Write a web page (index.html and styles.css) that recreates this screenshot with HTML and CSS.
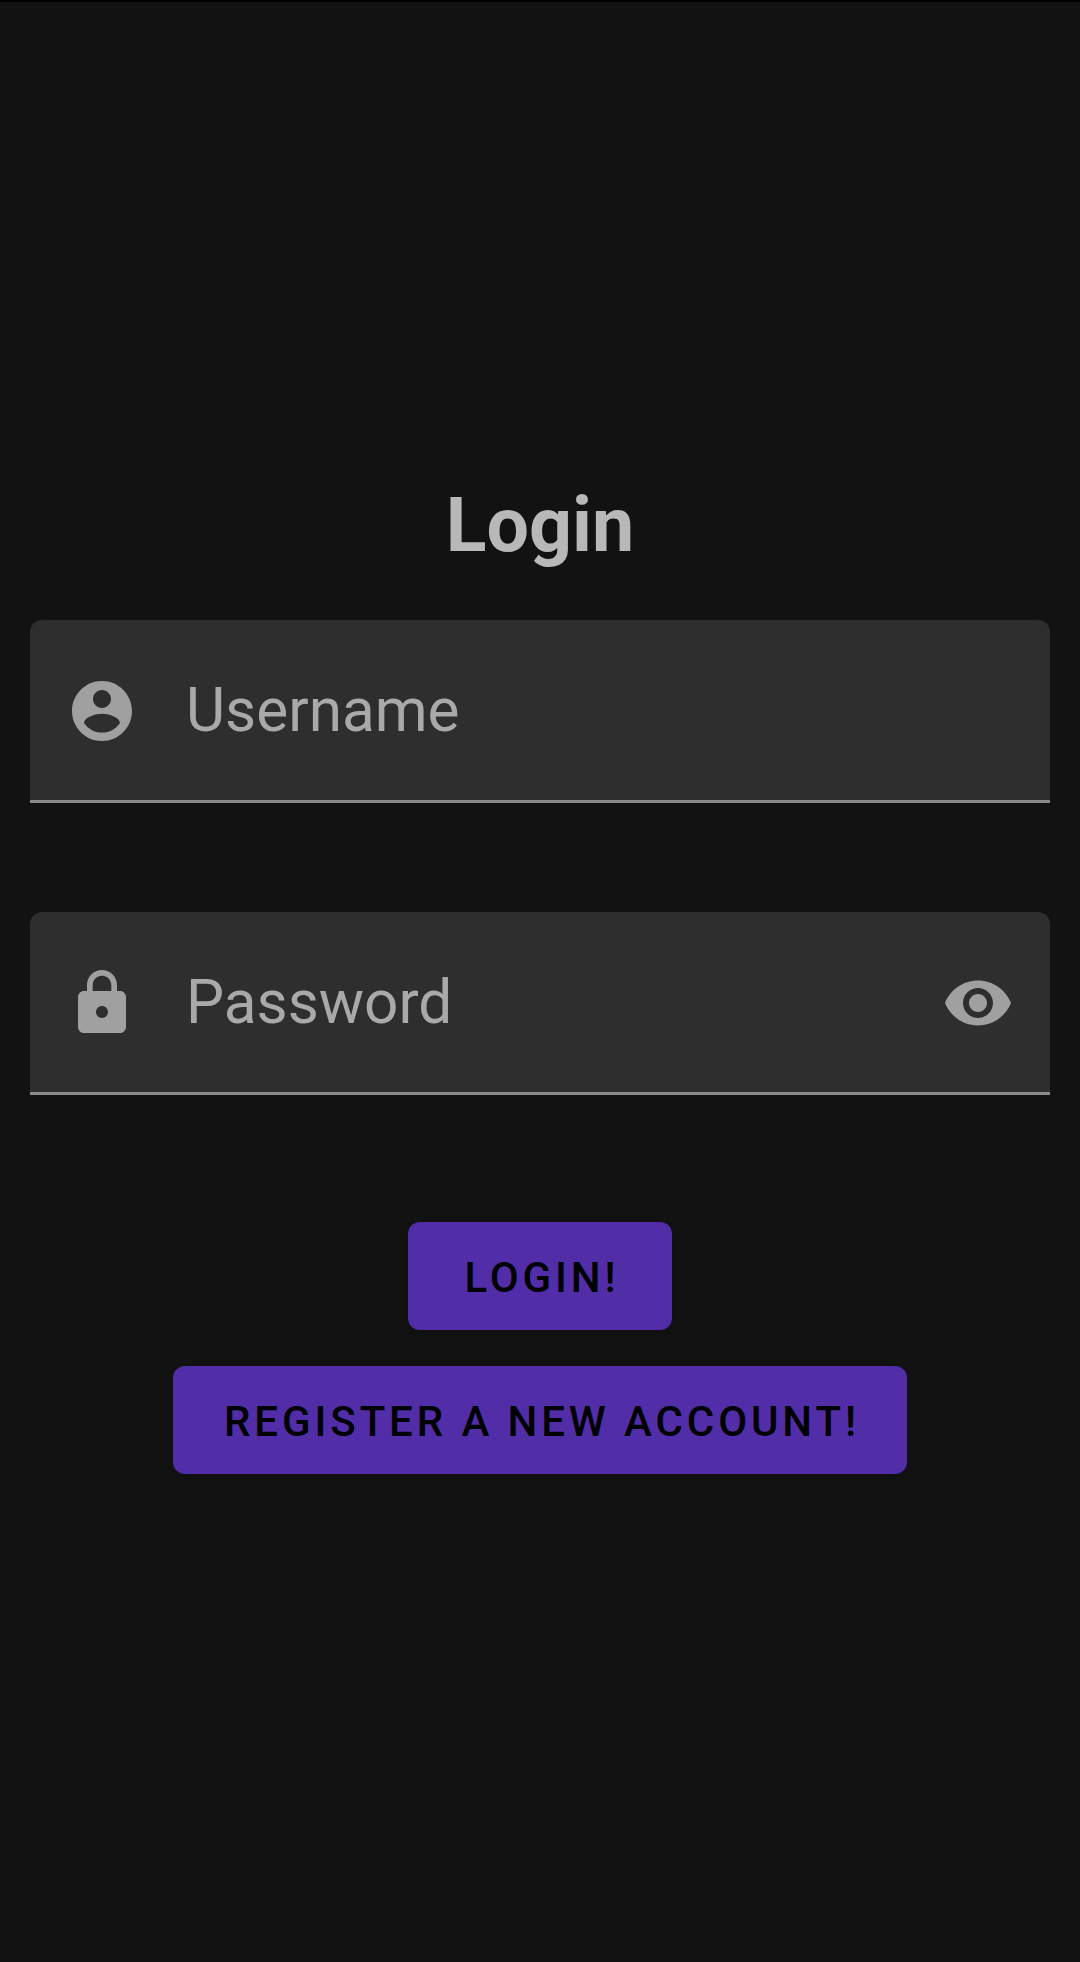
FILE: index.html
```html
<!DOCTYPE html>
<html lang="en">
<head>
<meta charset="utf-8">
<title>Login</title>
<link rel="stylesheet" href="styles.css">
</head>
<body>
<main class="screen">
  <h1 class="title">Login</h1>
  <form class="form">
    <div class="field">
      <svg class="icon" viewBox="0 0 24 24"><path d="M12,2C6.48,2 2,6.48 2,12s4.48,10 10,10 10,-4.48 10,-10S17.52,2 12,2zM12,5c1.66,0 3,1.34 3,3s-1.34,3 -3,3 -3,-1.34 -3,-3 1.34,-3 3,-3zM12,19.2c-2.5,0 -4.71,-1.28 -6,-3.22 0.03,-1.99 4,-3.08 6,-3.08 1.99,0 5.97,1.09 6,3.08 -1.29,1.94 -3.5,3.22 -6,3.22z"/></svg>
      <span class="hint">Username</span>
    </div>
    <div class="field">
      <svg class="icon" viewBox="0 0 24 24"><path d="M18,8h-1L17,6c0,-2.76 -2.24,-5 -5,-5S7,3.24 7,6v2L6,8c-1.1,0 -2,0.9 -2,2v10c0,1.1 0.9,2 2,2h12c1.1,0 2,-0.9 2,-2L20,10c0,-1.1 -0.9,-2 -2,-2zM12,17c-1.1,0 -2,-0.9 -2,-2s0.9,-2 2,-2 2,0.9 2,2 -0.9,2 -2,2zM15.1,8L8.9,8L8.9,6c0,-1.71 1.39,-3.1 3.1,-3.1 1.71,0 3.1,1.39 3.1,3.1v2z"/></svg>
      <span class="hint">Password</span>
      <svg class="icon" viewBox="0 0 24 24"><path d="M12,4.5C7,4.5 2.73,7.61 1,12c1.73,4.39 6,7.5 11,7.5s9.27,-3.11 11,-7.5c-1.73,-4.39 -6,-7.5 -11,-7.5zM12,17c-2.76,0 -5,-2.24 -5,-5s2.24,-5 5,-5 5,2.24 5,5 -2.24,5 -5,5zM12,9c-1.66,0 -3,1.34 -3,3s1.34,3 3,3 3,-1.34 3,-3 -1.34,-3 -3,-3z"/></svg>
    </div>
  </form>
  <div class="actions">
    <button class="button" type="button">LOGIN!</button>
    <button class="button" type="button">REGISTER A NEW ACCOUNT!</button>
  </div>
</main>
</body>
</html>
```
FILE: styles.css
```css
* {
  box-sizing: border-box;
}

body {
  margin: 0;
  background: #121212;
  font-family: Roboto, sans-serif;
}

.screen {
  height: 1962px;
  padding: 479px 30px 0;
  border-top: 2px solid #000;
}

.title {
  margin: 0;
  height: 139px;
  color: #b8b8b8;
  font-size: 75.3px;
  font-weight: 700;
  line-height: 88px;
  text-align: center;
}

.form {
  display: flex;
  flex-direction: column;
  gap: 109px;
}

.field {
  display: flex;
  align-items: center;
  height: 183px;
  padding: 2px 36px 0;
  border-bottom: 3px solid #8a8a8a;
  border-radius: 12px 12px 0 0;
  background: #2e2e2e;
}

.icon {
  width: 72px;
  height: 72px;
  fill: #a0a0a0;
}

.hint {
  flex: 1;
  margin-left: 48px;
  color: #a9a9a9;
  font-size: 60.3px;
  line-height: 70px;
}

.actions {
  display: flex;
  flex-direction: column;
  align-items: center;
  gap: 36px;
  margin-top: 127px;
}

.button {
  min-width: 264px;
  height: 108px;
  padding: 3px 47px 0 51px;
  border: 0;
  border-radius: 12px;
  background: #512da8;
  box-shadow: 0 3px 6px rgba(0, 0, 0, 0.15);
  color: #000;
  font-family: inherit;
  font-size: 42px;
  font-weight: 500;
  letter-spacing: 3.9px;
  line-height: 50px;
}
```
